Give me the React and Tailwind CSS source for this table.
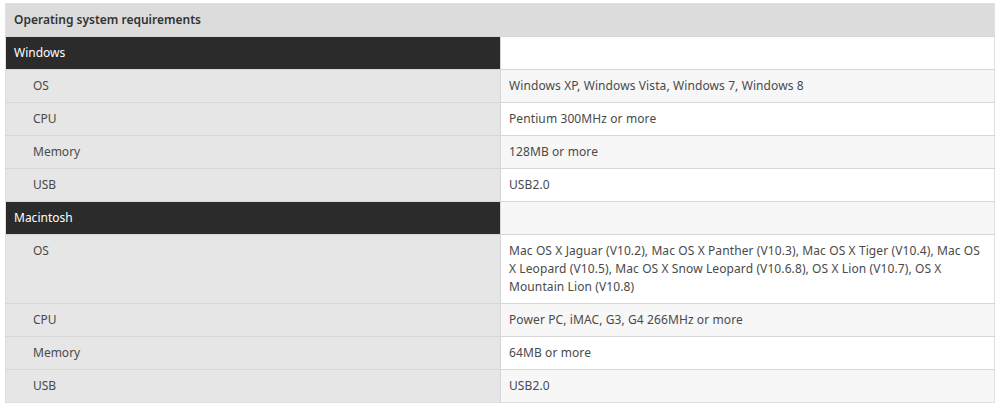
const groups = [
  {
    name: 'Windows',
    rows: [
      ['OS', 'Windows XP, Windows Vista, Windows 7, Windows 8'],
      ['CPU', 'Pentium 300MHz or more'],
      ['Memory', '128MB or more'],
      ['USB', 'USB2.0'],
    ],
  },
  {
    name: 'Macintosh',
    rows: [
      [
        'OS',
        'Mac OS X Jaguar (V10.2), Mac OS X Panther (V10.3), Mac OS X Tiger (V10.4), Mac OS X Leopard (V10.5), Mac OS X Snow Leopard (V10.6.8), OS X Lion (V10.7), OS X Mountain Lion (V10.8)',
      ],
      ['CPU', 'Power PC, iMAC, G3, G4 266MHz or more'],
      ['Memory', '64MB or more'],
      ['USB', 'USB2.0'],
    ],
  },
]

export default function App() {
  let stripe = 0
  const body = []
  groups.forEach((g) => {
    const shade = stripe++ % 2 === 1
    body.push(
      <tr key={g.name} className="border-t border-[#d6d6d6]">
        <td className="bg-[#2b2b2b] text-white px-2 py-[7px] align-top">{g.name}</td>
        <td className={`${shade ? 'bg-[#f7f7f7]' : 'bg-white'} border-l border-[#d6d6d6] px-2 py-[7px]`}></td>
      </tr>
    )
    g.rows.forEach(([label, value]) => {
      const s = stripe++ % 2 === 1
      body.push(
        <tr key={g.name + label} className="border-t border-[#d6d6d6]">
          <td className="bg-[#e6e6e6] text-[#4a4a4a] pl-[27px] pr-2 py-[7px] align-top">{label}</td>
          <td className={`${s ? 'bg-[#f7f7f7]' : 'bg-white'} text-[#4a4a4a] tracking-[0.1px] border-l border-[#d6d6d6] pl-2 pr-3 py-[7px] align-top`}>
            {value}
          </td>
        </tr>
      )
    })
  })

  return (
    <div className="min-h-screen bg-white pt-[3px] px-[5px] font-['Noto_Sans',sans-serif] text-[12px] leading-[18px]">
      <table className="w-[990px] border-collapse border border-[#e0e0e0] table-fixed">
        <colgroup>
          <col className="w-[495px]" />
          <col />
        </colgroup>
        <thead>
          <tr>
            <th colSpan={2} className="bg-[#dcdcdc] text-[#333] text-left font-semibold px-2 py-[7px]">
              Operating system requirements
            </th>
          </tr>
        </thead>
        <tbody>{body}</tbody>
      </table>
    </div>
  )
}
